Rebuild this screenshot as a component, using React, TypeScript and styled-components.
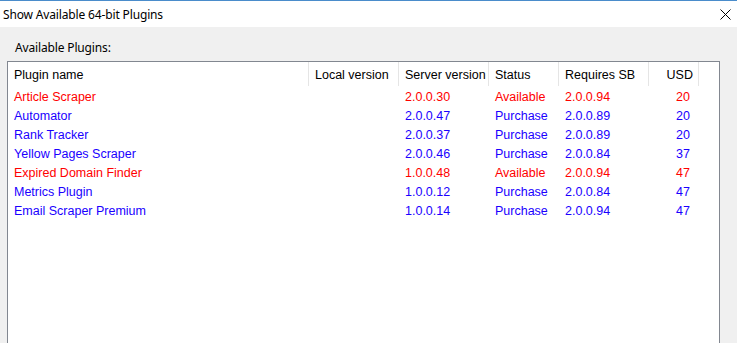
import React from "react";
import styled, { createGlobalStyle } from "styled-components";

const Global = createGlobalStyle`
  html, body { margin: 0; padding: 0; background: #f0f0f0; overflow: hidden; }
  #root { width: 737px; height: 343px; }
`;

const Window = styled.div`
  width: 737px;
  height: 343px;
  background: #f0f0f0;
  display: flex;
  flex-direction: column;
  overflow: hidden;
`;

const TitleBar = styled.div`
  height: 26px;
  background: #ffffff;
  border-top: 1px solid #4a8ccb;
  display: flex;
  align-items: center;
  justify-content: space-between;
  padding: 0 4px 0 3px;
  font-family: "Noto Sans", "Open Sans", sans-serif;
  font-size: 12px;
  color: #000;
  flex-shrink: 0;
`;

const Title = styled.span`
  letter-spacing: -0.15px;
`;

const CloseButton = styled.div`
  width: 12px;
  height: 12px;
  display: flex;
  align-items: center;
  justify-content: center;
  margin-right: 2px;
`;

const Content = styled.div`
  flex: 1;
  display: flex;
  flex-direction: column;
  padding: 13px 17px 0 7px;
`;

const GroupLabel = styled.div`
  font-family: "Noto Sans", "Open Sans", sans-serif;
  font-size: 12px;
  letter-spacing: -0.15px;
  color: #000;
  padding-left: 8px;
  height: 21px;
  line-height: 16px;
`;

const ListBox = styled.div`
  flex: 1;
  background: #ffffff;
  border: 1px solid #828790;
  border-bottom: none;
  font-family: "Liberation Sans", Arial, sans-serif;
  font-size: 12.5px;
`;

const Grid = styled.div`
  display: grid;
  grid-template-columns: 301px 90px 90px 70px 90px 50px 1fr;
`;

const HeaderCell = styled.div<{ $right?: boolean; $last?: boolean }>`
  height: 24px;
  box-sizing: border-box;
  display: flex;
  align-items: center;
  justify-content: ${(p) => (p.$right ? "flex-end" : "flex-start")};
  padding: 2px ${(p) => (p.$right ? "5px" : "0")} 0 ${(p) => (p.$right ? "0" : "6px")};
  border-right: ${(p) => (p.$last ? "none" : "1px solid #e5e5e5")};
  color: #000;
  white-space: nowrap;
  overflow: hidden;
`;

const Cell = styled.div<{ $color: string; $right?: boolean }>`
  height: 19px;
  box-sizing: border-box;
  display: flex;
  align-items: center;
  justify-content: ${(p) => (p.$right ? "flex-end" : "flex-start")};
  padding: 2px ${(p) => (p.$right ? "9px" : "0")} 0 ${(p) => (p.$right ? "0" : "6px")};
  color: ${(p) => p.$color};
  white-space: nowrap;
`;

type Plugin = {
  name: string;
  local: string;
  server: string;
  status: string;
  sb: string;
  usd: string;
};

const plugins: Plugin[] = [
  { name: "Article Scraper", local: "", server: "2.0.0.30", status: "Available", sb: "2.0.0.94", usd: "20" },
  { name: "Automator", local: "", server: "2.0.0.47", status: "Purchase", sb: "2.0.0.89", usd: "20" },
  { name: "Rank Tracker", local: "", server: "2.0.0.37", status: "Purchase", sb: "2.0.0.89", usd: "20" },
  { name: "Yellow Pages Scraper", local: "", server: "2.0.0.46", status: "Purchase", sb: "2.0.0.84", usd: "37" },
  { name: "Expired Domain Finder", local: "", server: "1.0.0.48", status: "Available", sb: "2.0.0.94", usd: "47" },
  { name: "Metrics Plugin", local: "", server: "1.0.0.12", status: "Purchase", sb: "2.0.0.84", usd: "47" },
  { name: "Email Scraper Premium", local: "", server: "1.0.0.14", status: "Purchase", sb: "2.0.0.94", usd: "47" },
];

const colorFor = (status: string) => (status === "Available" ? "#ff0000" : "#1a00ff");

export default function App() {
  return (
    <>
      <Global />
      <Window>
        <TitleBar>
          <Title>Show Available 64-bit Plugins</Title>
          <CloseButton>
            <svg width="11" height="11" viewBox="0 0 11 11">
              <path d="M0.5 0.5 L10.5 10.5 M10.5 0.5 L0.5 10.5" stroke="#000" strokeWidth="1" />
            </svg>
          </CloseButton>
        </TitleBar>
        <Content>
          <GroupLabel>Available Plugins:</GroupLabel>
          <ListBox>
            <Grid>
              <HeaderCell>Plugin name</HeaderCell>
              <HeaderCell>Local version</HeaderCell>
              <HeaderCell>Server version</HeaderCell>
              <HeaderCell>Status</HeaderCell>
              <HeaderCell>Requires SB</HeaderCell>
              <HeaderCell $right>USD</HeaderCell>
              <HeaderCell $last />
              {plugins.map((p) => {
                const c = colorFor(p.status);
                return (
                  <React.Fragment key={p.name}>
                    <Cell $color={c}>{p.name}</Cell>
                    <Cell $color={c}>{p.local}</Cell>
                    <Cell $color={c}>{p.server}</Cell>
                    <Cell $color={c}>{p.status}</Cell>
                    <Cell $color={c}>{p.sb}</Cell>
                    <Cell $color={c} $right>{p.usd}</Cell>
                    <Cell $color={c} />
                  </React.Fragment>
                );
              })}
            </Grid>
          </ListBox>
        </Content>
      </Window>
    </>
  );
}
